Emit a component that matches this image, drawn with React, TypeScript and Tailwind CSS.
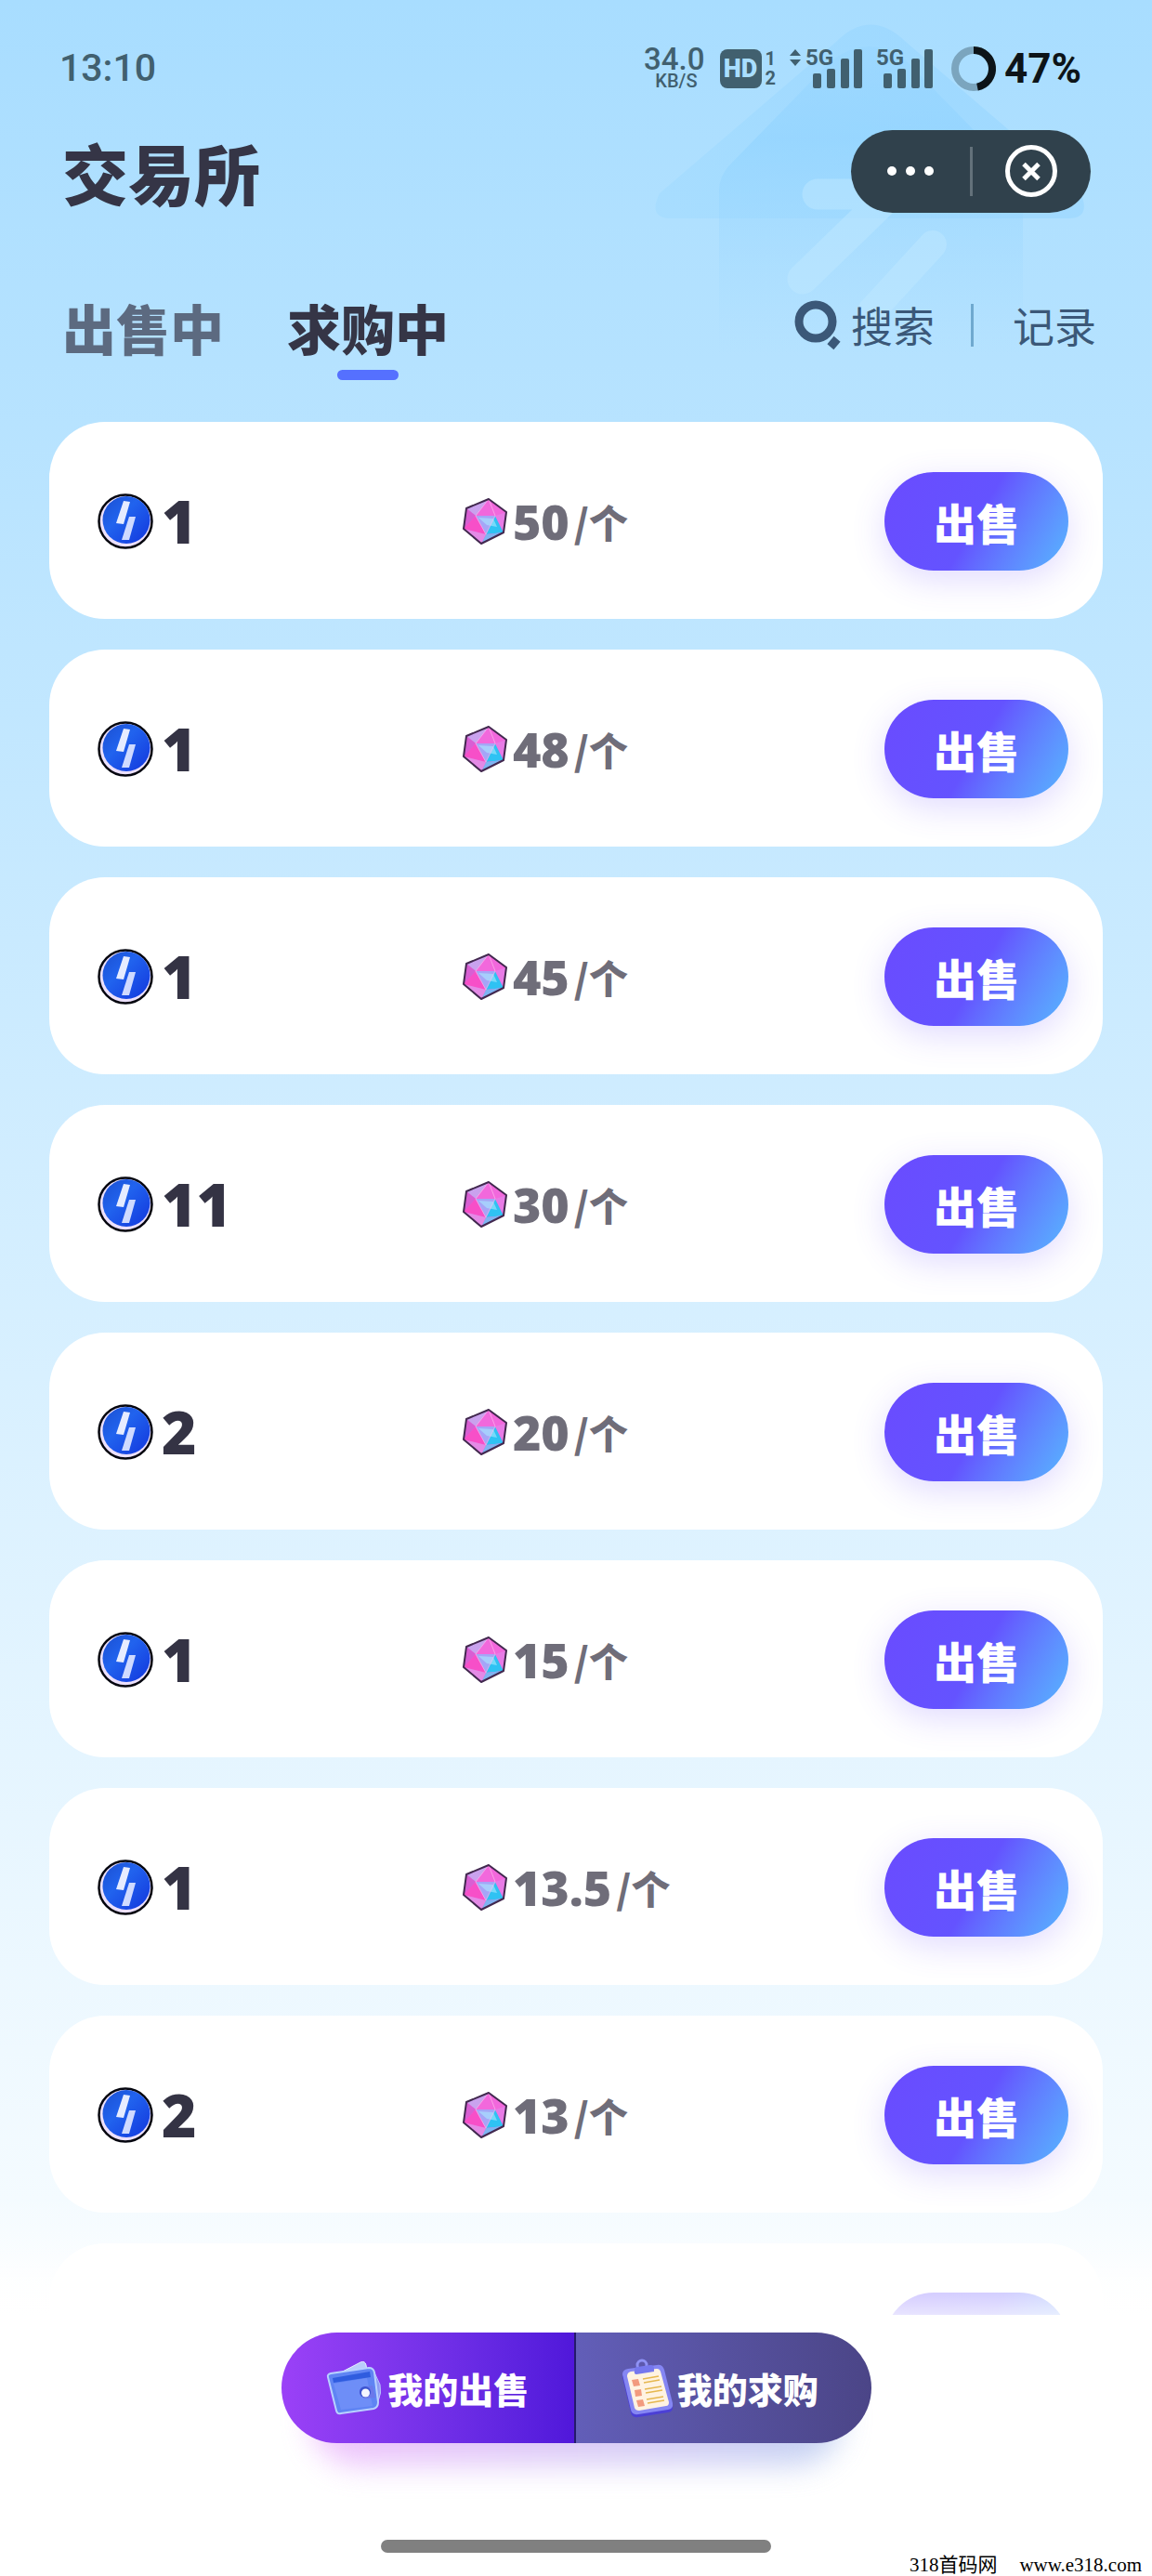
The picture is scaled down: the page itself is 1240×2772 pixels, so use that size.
import { useState } from "react";

type Order = {
  id: number;
  amount: string;
  price: string;
};

const orders: Order[] = [
  { id: 1, amount: "1", price: "50" },
  { id: 2, amount: "1", price: "48" },
  { id: 3, amount: "1", price: "45" },
  { id: 4, amount: "11", price: "30" },
  { id: 5, amount: "2", price: "20" },
  { id: 6, amount: "1", price: "15" },
  { id: 7, amount: "1", price: "13.5" },
  { id: 8, amount: "2", price: "13" },
];

const tabs = ["出售中", "求购中"];

function HouseBackdrop() {
  return (
    <svg
      className="pointer-events-none absolute top-0 right-0 h-[400px] w-[620px]"
      viewBox="0 0 620 400"
      fill="none"
      aria-hidden="true"
    >
      <defs>
        <linearGradient id="roof" x1="90" y1="200" x2="330" y2="30" gradientUnits="userSpaceOnUse">
          <stop stopColor="#9fdaff" stopOpacity="0.5" />
          <stop offset="1" stopColor="#98d6ff" stopOpacity="0.6" />
        </linearGradient>
        <linearGradient id="body" x1="0" y1="50" x2="0" y2="380" gradientUnits="userSpaceOnUse">
          <stop stopColor="#92d3ff" stopOpacity="0.3" />
          <stop offset="0.3" stopColor="#90d3ff" stopOpacity="0.6" />
          <stop offset="1" stopColor="#a4dbff" stopOpacity="0" />
        </linearGradient>
      </defs>
      <path
        d="M280 45Q317 8 355 45L542 205Q556 235 530 235H98Q78 232 90 208Z"
        fill="url(#roof)"
      />
      <path d="M154 380V205Q154 190 165 178L275 65Q317 35 355 65L465 178Q481 192 481 210V380Z" fill="url(#body)" />
      <g fill="none" stroke="#bfe8ff" strokeLinecap="round" strokeLinejoin="round" strokeWidth="33" opacity="0.5">
        <path d="M260 209H338L244 300" />
        <path d="M384 263L318 335" strokeWidth="30" />
      </g>
    </svg>
  );
}

function Signal({ arrows = false }: { arrows?: boolean }) {
  return (
    <div className="flex h-[44px] items-start">
      {arrows && (
        <svg className="mr-1 h-[20px] w-[14px]" viewBox="0 0 14 20" fill="currentColor" aria-hidden="true">
          <path d="M7 1L13 8H1ZM7 19L1 12H13Z" />
        </svg>
      )}
      <div className="relative h-[44px] w-[62px]">
        <span className="absolute top-0 left-0 text-[24px] leading-[20px] font-bold">5G</span>
        <svg className="h-[44px] w-[62px]" viewBox="0 0 62 44" fill="currentColor" aria-hidden="true">
          <rect x="8" y="27" width="9" height="16" rx="2" />
          <rect x="23" y="22" width="9" height="21" rx="2" />
          <rect x="38" y="11" width="9" height="32" rx="2" />
          <rect x="52" y="1" width="9" height="42" rx="2" />
        </svg>
      </div>
    </div>
  );
}

function StatusBar() {
  return (
    <div className="flex h-[120px] items-center justify-between pt-[28px] pr-[76px] pl-[64px] font-[Roboto,sans-serif] text-[#41606f]">
      <time className="text-[41px] font-medium">13:10</time>
      <div className="flex items-center">
        <div className="mr-[16px] text-right">
          <div className="text-[33px] leading-[26px] font-medium">34.0</div>
          <div className="pr-2 text-[20px] leading-[20px] font-medium">KB/S</div>
        </div>
        <div className="flex h-[42px] w-[45px] items-center justify-center rounded-lg bg-[#41606f] text-[27px] font-black text-[#a9deff]">
          HD
        </div>
        <div className="mr-[14px] ml-1 text-[20px] leading-[21px] font-bold">
          <div>1</div>
          <div>2</div>
        </div>
        <Signal arrows />
        <div className="w-[14px]" />
        <Signal />
        <svg className="ml-[18px] h-[50px] w-[50px]" viewBox="0 0 50 50" fill="none" strokeWidth="8" aria-hidden="true">
          <circle cx="25" cy="25" r="20" stroke="#7ba5be" />
          <path d="M25 5A20 20 0 0 1 29 44.600" stroke="#0d1418" />
        </svg>
        <span className="ml-2 text-[44px] font-bold text-[#0d1418]">47%</span>
      </div>
    </div>
  );
}

function TitleBar() {
  return (
    <header className="flex h-[128px] items-center justify-between pr-[66px] pl-[67px]">
      <h1 className="text-[71px] leading-[96px] font-black text-[#353546]">交易所</h1>
      <div className="flex h-[89px] w-[258px] items-center rounded-full bg-[#30414c] text-white">
        <button type="button" aria-label="更多" className="flex h-full flex-1 items-center justify-center gap-[10px]">
          <span className="size-[10px] rounded-full bg-white" />
          <span className="size-[10px] rounded-full bg-white" />
          <span className="size-[10px] rounded-full bg-white" />
        </button>
        <span className="h-[53px] w-[3px] bg-[#63717a]" />
        <button type="button" aria-label="关闭" className="flex h-full flex-1 items-center justify-center">
          <svg className="size-[56px]" viewBox="0 0 56 56" fill="none" stroke="currentColor" strokeWidth="5">
            <circle cx="28" cy="28" r="25.500" />
            <path d="M20 20.500L36 36.500M36 20.500L20 36.500" />
          </svg>
        </button>
      </div>
    </header>
  );
}

function TabBar() {
  const [active, setActive] = useState(1);

  return (
    <div className="flex h-[206px] items-start justify-between pt-[64px] pr-[60px] pl-[67px]">
      <div className="flex gap-[68px]">
        {tabs.map((tab, i) => (
          <button
            key={tab}
            type="button"
            onClick={() => setActive(i)}
            className={`flex flex-col items-center gap-[6px] text-[58px] leading-[80px] font-black ${
              i === active ? "text-[#353546]" : "text-[#5c6a80]"
            }`}
          >
            {tab}
            {i === active && <span className="h-[11px] w-[66px] rounded-full bg-[#5570ff]" />}
          </button>
        ))}
      </div>
      <div className="flex h-[76px] items-center text-[45px] text-[#3b5878]">
        <button type="button" className="flex items-center gap-[9px]">
          <svg className="h-[56px] w-[52px]" viewBox="0 0 52 56" fill="none" aria-hidden="true">
            <circle cx="23" cy="24" r="18" stroke="currentColor" strokeWidth="9" />
            <path d="M39 44L46 50" stroke="currentColor" strokeWidth="11" />
          </svg>
          搜索
        </button>
        <span className="mr-[42px] ml-[39px] h-[46px] w-[3px] bg-[#6fa9cf]" />
        <button type="button">记录</button>
      </div>
    </div>
  );
}

function Coin() {
  return (
    <svg className="size-[60px]" viewBox="0 0 60 60" aria-hidden="true">
      <defs>
        <linearGradient id="coin" x1="0" y1="0" x2="1" y2="1">
          <stop stopColor="#1b4fd0" />
          <stop offset="0.4" stopColor="#2163ee" />
          <stop offset="1" stopColor="#1236dd" />
        </linearGradient>
      </defs>
      <circle cx="30" cy="30" r="28.500" fill="#ece0fb" stroke="#05060f" strokeWidth="2.500" />
      <circle cx="31" cy="28.500" r="25.500" fill="url(#coin)" />
      <path d="M28 8L35 9L28 33L20 32Z" fill="#e6ecff" />
      <path d="M34 25L41 25L34 50L26 50Z" fill="#cfdaff" />
    </svg>
  );
}

function Gem() {
  return (
    <svg className="h-[52px] w-[50px]" viewBox="0 0 50 52" aria-hidden="true">
      <path d="M5 12L29 2L48 16L45 38L21 50L2 34Z" fill="#ee62d6" />
      <path d="M5 12L29 2L15 20Z" fill="#c9a2ee" />
      <path d="M29 2L48 16L35 21L15 20Z" fill="#f268dc" />
      <path d="M5 12L15 20L2 34Z" fill="#d85fd3" />
      <path d="M15 20L36 20L26 40Z" fill="#a5a5f7" />
      <path d="M15 20L26 40L2 34Z" fill="#f74fc8" />
      <path d="M26 40L36 20L45 38Z" fill="#2fc2f3" />
      <path d="M36 20L48 16L45 38Z" fill="#e87be6" />
      <path d="M26 40L45 38L21 50Z" fill="#7fb4f2" />
      <path d="M2 34L26 40L21 50Z" fill="#e48ae6" />
      <path d="M18 22L34 23L38 32L27 30Z" fill="#a9eaff" opacity="0.6" />
      <path d="M29 2L15 20L26 40L36 20Z" fill="none" stroke="#ffc4f2" strokeOpacity="0.6" />
      <path d="M5 12L29 2L48 16L45 38L21 50L2 34Z" fill="none" stroke="#42284f" strokeWidth="2" strokeLinejoin="round" />
    </svg>
  );
}

function OrderCard({ order }: { order: Order }) {
  return (
    <li className="grid h-[212px] shrink-0 grid-cols-[3fr_5fr] items-center rounded-[60px] bg-white pt-[2px] pr-[37px] pl-[52px]">
      <div className="flex items-center gap-[9px]">
        <Coin />
        <span className="font-['Open_Sans',sans-serif] text-[64px] leading-none font-extrabold text-[#343344]">
          {order.amount}
        </span>
      </div>
      <div className="flex items-center justify-between">
        <div className="flex items-center text-[#6f6d79]">
          <Gem />
          <span className="ml-[5px] font-['Open_Sans',sans-serif] text-[52px] leading-none font-extrabold">
            {order.price}
          </span>
          <span className="ml-[5px] text-[42px] leading-none font-black">/个</span>
        </div>
        <button
          type="button"
          className="h-[106px] w-[198px] rounded-full bg-linear-120 from-[#6a4bff] from-0% via-[#6453ff] via-50% to-[#58adff] to-95% text-[46px] leading-none font-black text-white shadow-[0_10px_36px_rgba(106,75,255,0.2)]"
        >
          出售
        </button>
      </div>
    </li>
  );
}

function PendingCard() {
  return (
    <li
      aria-hidden="true"
      className="flex h-[212px] shrink-0 items-center justify-end rounded-[60px] bg-white pr-[37px]"
    >
      <div className="h-[106px] w-[198px] rounded-full bg-linear-120 from-[#6a4bff] from-0% via-[#6453ff] via-50% to-[#58adff] to-95%" />
    </li>
  );
}

function WalletIcon() {
  return (
    <svg className="h-[60px] w-[60px]" viewBox="0 0 60 60" aria-hidden="true">
      <path d="M12 15L37 2Q42 0 43 5L45 17Z" fill="#b9cdfb" stroke="#e8efff" />
      <path d="M45 8L51 11L58 26Q60 35 56 44L50 48Z" fill="#8e9cf5" stroke="#b9c4ff" />
      <path d="M2 18Q1 15 5 14L46 8Q51 8 52 13L56 45Q56 51 51 52L16 57Q12 58 11 54Z" fill="#5f84f3" stroke="#b8d1ff" strokeWidth="2" />
      <path d="M7 19L47 12L48 18L8 24Z" fill="#2f5cdf" />
      <path d="M8 25L44 19L50 49L16 53Z" fill="#7291f8" opacity="0.8" />
      <path d="M50 27L38 29Q34 33 37 38L41 41L53 40Z" fill="#6b78ea" />
      <circle cx="42" cy="34" r="6" fill="#3a53cf" />
      <circle cx="42.500" cy="35" r="4.500" fill="#f3f5ff" />
    </svg>
  );
}

function ClipboardIcon() {
  return (
    <svg className="h-[64px] w-[58px]" viewBox="0 0 58 64" aria-hidden="true">
      <circle cx="22" cy="7" r="5" fill="none" stroke="#8f92f5" strokeWidth="3" />
      <path d="M1 20Q1 14 7 13L38 8Q44 7 46 13L55 50Q56 57 50 58L18 63Q11 64 10 58Z" fill="#4b3fd6" />
      <path d="M1 17Q1 12 7 11L38 7Q44 6 46 12L55 48Q56 54 50 55L18 60Q11 61 10 55Z" fill="#8586f3" />
      <path d="M6 19Q6 15 10 14L38 11Q41 11 42 14L51 47Q51 51 48 51L19 56Q15 56 14 53Z" fill="#fff3e2" />
      <path d="M14 12Q14 9 17 9L31 7Q35 7 35 11V14L16 17Q13 17 14 12Z" fill="#7678ee" />
      <path d="M11 23L18 22L20 29L13 30ZM14 34L21 33L22 40L15 41ZM16 45L23 44L25 51L18 52Z" fill="#f29a7e" />
      <path
        d="M23 22L40 19M24 26L41 23M25 33L43 30M26 37L44 34M27 44L45 41M28 48L46 45"
        stroke="#e6b84f"
        strokeWidth="1.500"
      />
    </svg>
  );
}

function BottomBar() {
  return (
    <footer className="flex h-[281px] shrink-0 flex-col items-center pt-[19px]">
      <div className="relative">
        {/* coloured glow under the pill */}
        <div className="absolute inset-x-8 top-10 -bottom-6 rounded-full bg-linear-to-r from-[#e9a8fb] to-[#a9bfec] opacity-70 blur-lg" />
        <div className="relative grid h-[119px] w-[635px] grid-cols-2 overflow-hidden rounded-full text-[38px] font-black text-white">
          <button
            type="button"
            className="flex items-center justify-center gap-[6px] border-r-2 border-[#241a6b] bg-linear-to-r from-[#9b41f7] to-[#5017da]"
          >
            <WalletIcon />
            我的出售
          </button>
          <button
            type="button"
            className="flex items-center justify-center gap-[2px] bg-linear-to-r from-[#625eb8] to-[#4b4587] pr-2"
          >
            <ClipboardIcon />
            我的求购
          </button>
        </div>
      </div>
      <div className="mt-[104px] h-[14px] w-[420px] rounded-full bg-[#808080]" />
      <p className="mt-[2px] self-end pr-[11px] font-['Liberation_Serif','Noto_Sans_CJK_SC',serif] text-[21px] leading-[23px] text-black">
        <span className="mr-[24px]">318首码网</span>
        <a href="#home">www.e318.com</a>
      </p>
    </footer>
  );
}

export default function App() {
  return (
    <div className="flex h-screen flex-col overflow-hidden bg-white font-['Noto_Sans_CJK_SC',sans-serif]">
      <main className="relative flex min-h-0 flex-1 flex-col bg-linear-to-b from-[#a8ddff] via-[#f4fbff] via-95% to-white">
        <HouseBackdrop />
        <div className="relative">
          <StatusBar />
          <TitleBar />
          <TabBar />
        </div>
        <div className="relative min-h-0 flex-1 overflow-hidden">
          <ul className="flex flex-col gap-[33px] px-[53px]">
            {orders.map((order) => (
              <OrderCard key={order.id} order={order} />
            ))}
            <PendingCard />
          </ul>
          <div className="pointer-events-none absolute inset-x-0 bottom-0 h-[77px] bg-linear-to-b from-white/0 via-white/70 via-65% to-white/85" />
        </div>
      </main>
      <BottomBar />
    </div>
  );
}
